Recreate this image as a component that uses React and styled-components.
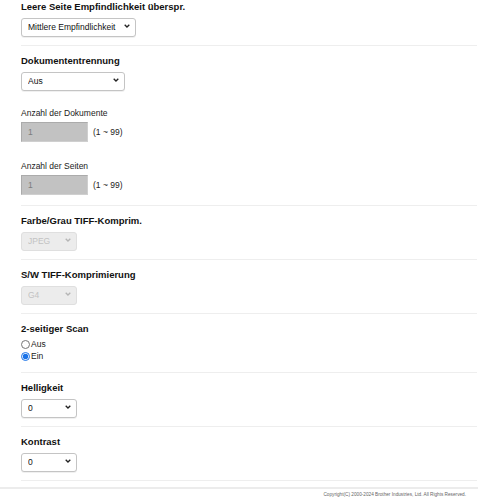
import React from "react";
import styled, { createGlobalStyle } from "styled-components";

const GlobalStyle = createGlobalStyle`
	html, body {
		margin: 0;
		padding: 0;
		background: #fff;
	}
	body {
		font-family: "Liberation Sans", Arial, sans-serif;
		color: #111;
	}
`;

const Page = styled.div`
	width: 478px;
	height: 499px;
	overflow: hidden;
	display: flex;
	flex-direction: column;
`;

const Content = styled.div`
	padding: 0 1px 0 21px;
`;

const Section = styled.div`
	display: flex;
	flex-direction: column;
	align-items: flex-start;
	padding: ${p => (p.first ? "0" : "8px")} 0 10px;
	border-bottom: 1px solid #eeeeee;
`;

const Title = styled.div`
	font-size: 9.5px;
	font-weight: bold;
	line-height: 14px;
	margin-bottom: 2px;
`;

const SubLabel = styled.div`
	font-size: 8.5px;
	line-height: 12px;
	margin-top: 18px;
	margin-bottom: 3px;
	color: #222;
`;

const SelectWrap = styled.div`
	position: relative;
	width: ${p => p.width}px;
	height: 19px;
	svg {
		position: absolute;
		right: 6px;
		top: 8px;
		pointer-events: none;
	}
`;

const Select = styled.select`
	appearance: none;
	-webkit-appearance: none;
	box-sizing: border-box;
	width: 100%;
	height: 100%;
	margin: 0;
	padding: 0 14px 0 6px;
	font-family: "Liberation Sans", Arial, sans-serif;
	font-size: 8.5px;
	color: #111;
	background: #fff;
	border: 1px solid #c4c4c4;
	border-radius: 3px;
	box-shadow: 0 1px 0 rgba(0, 0, 0, 0.06);
	outline: none;
	&:disabled {
		color: #a9a9a9;
		background: #e4e4e4;
		border-color: #d2d2d2;
		box-shadow: none;
	}
`;

const InputRow = styled.div`
	display: flex;
	align-items: center;
	gap: 5px;
	font-size: 8.5px;
	color: #222;
`;

const NumberBox = styled.input`
	box-sizing: border-box;
	width: 67px;
	height: 20px;
	margin: 0;
	padding: 0 6px;
	font-family: "Liberation Sans", Arial, sans-serif;
	font-size: 8.5px;
	color: #7c7c7c;
	background: #c2c2c2;
	border: 1px solid #ababab;
	border-right-color: #cfcfcf;
	border-bottom-color: #cfcfcf;
	outline: none;
`;

const RadioRow = styled.label`
	display: flex;
	align-items: center;
	height: 12px;
	font-size: 8.5px;
	color: #222;
	input {
		width: 9px;
		height: 9px;
		margin: 0 1px 0 0;
		accent-color: #1a73e8;
	}
`;

const Footer = styled.div`
	margin-top: 6px;
	border-top: 2px solid #ececec;
	padding: 3px 12px 0 0;
	text-align: right;
	font-size: 4.7px;
	color: #666;
`;

const Chevron = ({ disabled }) => (
	<svg width="6" height="4" viewBox="0 0 6 4">
		<path d="M0.7 0.7 L3 3 L5.3 0.7" fill="none" stroke={disabled ? "#b5b5b5" : "#222"} strokeWidth="1.3" />
	</svg>
);

const DropDown = ({ width, value, options, disabled }) => (
	<SelectWrap width={width}>
		<Select defaultValue={value} disabled={disabled}>
			{options.map(o => (
				<option key={o} value={o}>{o}</option>
			))}
		</Select>
		<Chevron disabled={disabled} />
	</SelectWrap>
);

const levels = ["-50", "-40", "-30", "-20", "-10", "0", "+10", "+20", "+30", "+40", "+50"];

export default function App() {
	return (
		<Page>
			<GlobalStyle />
			<Content>
				<Section first>
					<Title>Leere Seite Empfindlichkeit überspr.</Title>
					<DropDown width={115} value="Mittlere Empfindlichkeit" options={["Niedrige Empfindlichkeit", "Mittlere Empfindlichkeit", "Hohe Empfindlichkeit"]} />
				</Section>
				<Section>
					<Title>Dokumententrennung</Title>
					<DropDown width={104} value="Aus" options={["Aus", "Anzahl der Dokumente", "Anzahl der Seiten"]} />
					<SubLabel>Anzahl der Dokumente</SubLabel>
					<InputRow>
						<NumberBox defaultValue="1" disabled />
						(1 ~ 99)
					</InputRow>
					<SubLabel>Anzahl der Seiten</SubLabel>
					<InputRow>
						<NumberBox defaultValue="1" disabled />
						(1 ~ 99)
					</InputRow>
				</Section>
				<Section>
					<Title>Farbe/Grau TIFF-Komprim.</Title>
					<DropDown width={56} value="JPEG" options={["JPEG"]} disabled />
				</Section>
				<Section>
					<Title>S/W TIFF-Komprimierung</Title>
					<DropDown width={56} value="G4" options={["G4"]} disabled />
				</Section>
				<Section>
					<Title>2-seitiger Scan</Title>
					<RadioRow>
						<input type="radio" name="duplex" value="off" />
						Aus
					</RadioRow>
					<RadioRow>
						<input type="radio" name="duplex" value="on" defaultChecked />
						Ein
					</RadioRow>
				</Section>
				<Section>
					<Title>Helligkeit</Title>
					<DropDown width={56} value="0" options={levels} />
				</Section>
				<Section>
					<Title>Kontrast</Title>
					<DropDown width={56} value="0" options={levels} />
				</Section>
			</Content>
			<Footer>Copyright(C) 2000-2024 Brother Industries, Ltd. All Rights Reserved.</Footer>
		</Page>
	);
}
